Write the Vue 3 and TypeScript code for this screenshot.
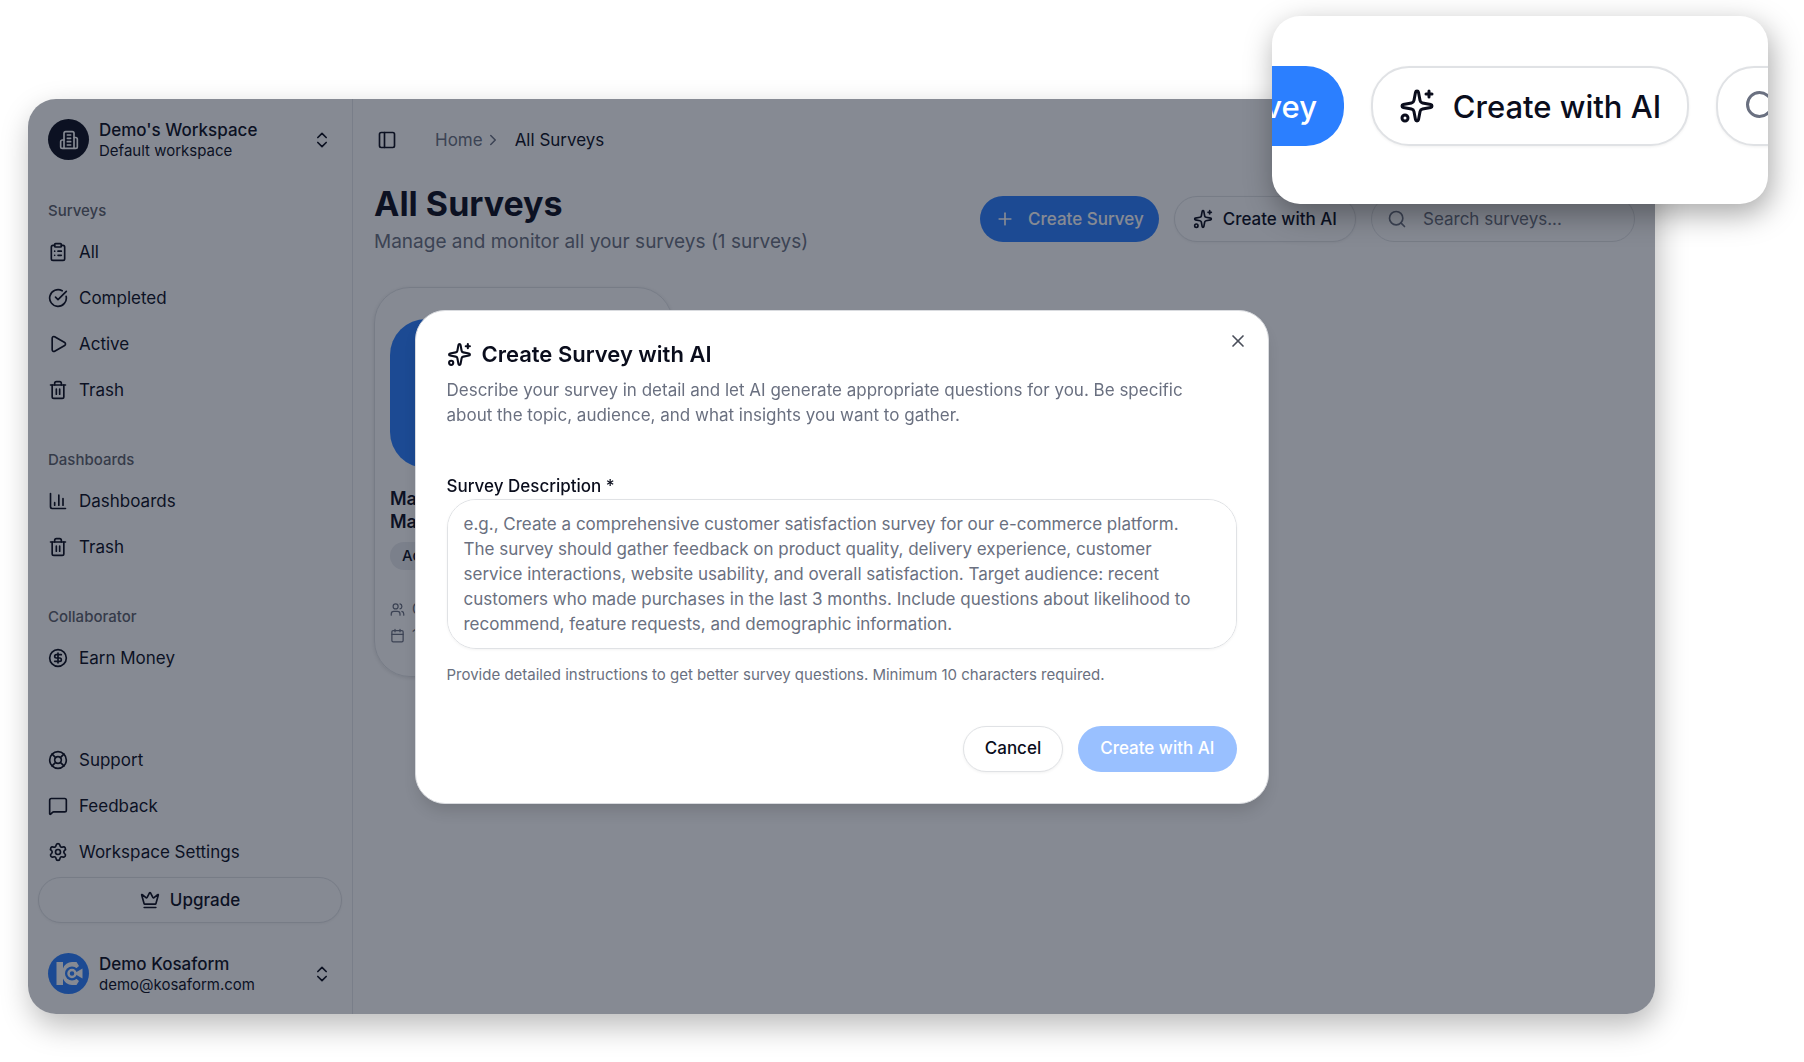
<script setup lang="ts">
import { ref, h, type FunctionalComponent } from 'vue'

const icons: Record<string, string[]> = {
  sparkles: [
    'M11.017 2.814a1 1 0 0 1 1.966 0l1.051 5.558a2 2 0 0 0 1.594 1.594l5.558 1.051a1 1 0 0 1 0 1.966l-5.558 1.051a2 2 0 0 0-1.594 1.594l-1.051 5.558a1 1 0 0 1-1.966 0l-1.051-5.558a2 2 0 0 0-1.594-1.594l-5.558-1.051a1 1 0 0 1 0-1.966l5.558-1.051a2 2 0 0 0 1.594-1.594z',
    'M20 2v4',
    'M22 4h-4',
    'M2 20a2 2 0 1 0 4 0a2 2 0 1 0-4 0',
  ],
  building: [
    'M6 22V4a2 2 0 0 1 2-2h8a2 2 0 0 1 2 2v18Z',
    'M6 12H4a2 2 0 0 0-2 2v6a2 2 0 0 0 2 2h2',
    'M18 9h2a2 2 0 0 1 2 2v9a2 2 0 0 1-2 2h-2',
    'M10 6h4M10 10h4M10 14h4M10 18h4',
  ],
  clipboard: [
    'M9 2h6a1 1 0 0 1 1 1v2a1 1 0 0 1-1 1H9a1 1 0 0 1-1-1V3a1 1 0 0 1 1-1z',
    'M16 4h2a2 2 0 0 1 2 2v14a2 2 0 0 1-2 2H6a2 2 0 0 1-2-2V6a2 2 0 0 1 2-2h2',
    'M12 11h4M12 16h4M8 11h.01M8 16h.01',
  ],
  check: ['M21.801 10A10 10 0 1 1 17 3.335', 'm9 11 3 3L22 4'],
  play: ['M5 5a2 2 0 0 1 3.008-1.728l11.997 6.998a2 2 0 0 1 .003 3.458l-12 7A2 2 0 0 1 5 19z'],
  trash: ['M3 6h18', 'M19 6v14a2 2 0 0 1-2 2H7a2 2 0 0 1-2-2V6', 'M8 6V4a2 2 0 0 1 2-2h4a2 2 0 0 1 2 2v2', 'M10 11v6M14 11v6'],
  chart: ['M3 3v16a2 2 0 0 0 2 2h16', 'M18 17V9M13 17V5M8 17v-3'],
  dollar: ['M2 12a10 10 0 1 0 20 0a10 10 0 1 0-20 0', 'M16 8h-6a2 2 0 1 0 0 4h4a2 2 0 1 1 0 4H8', 'M12 18V6'],
  buoy: [
    'M2 12a10 10 0 1 0 20 0a10 10 0 1 0-20 0',
    'M8 12a4 4 0 1 0 8 0a4 4 0 1 0-8 0',
    'M4.93 4.93l4.24 4.24M14.83 9.17l4.24-4.24M14.83 14.83l4.24 4.24M9.17 14.83l-4.24 4.24',
  ],
  message: ['M22 17a2 2 0 0 1-2 2H6.828a2 2 0 0 0-1.414.586l-2.202 2.202A.71.71 0 0 1 2 21.286V5a2 2 0 0 1 2-2h16a2 2 0 0 1 2 2z'],
  gear: [
    'M9.671 4.136a2.34 2.34 0 0 1 4.659 0 2.34 2.34 0 0 0 3.319 1.915 2.34 2.34 0 0 1 2.33 4.033 2.34 2.34 0 0 0 0 3.831 2.34 2.34 0 0 1-2.33 4.033 2.34 2.34 0 0 0-3.319 1.915 2.34 2.34 0 0 1-4.659 0 2.34 2.34 0 0 0-3.32-1.915 2.34 2.34 0 0 1-2.33-4.033 2.34 2.34 0 0 0 0-3.831A2.34 2.34 0 0 1 6.35 6.051a2.34 2.34 0 0 0 3.319-1.915',
    'M9 12a3 3 0 1 0 6 0a3 3 0 1 0-6 0',
  ],
  crown: [
    'M11.562 3.266a.5.5 0 0 1 .876 0L15.39 8.87a1 1 0 0 0 1.516.294L21.183 5.5a.5.5 0 0 1 .798.519l-2.834 10.246a1 1 0 0 1-.956.734H5.81a1 1 0 0 1-.957-.734L2.02 6.02a.5.5 0 0 1 .798-.519l4.276 3.664a1 1 0 0 0 1.516-.294z',
    'M5 21h14',
  ],
  updown: ['M7 15l5 5 5-5', 'M7 9l5-5 5 5'],
  panel: ['M5 3h14a2 2 0 0 1 2 2v14a2 2 0 0 1-2 2H5a2 2 0 0 1-2-2V5a2 2 0 0 1 2-2z', 'M9 3v18'],
  right: ['M9 18l6-6-6-6'],
  plus: ['M5 12h14', 'M12 5v14'],
  search: ['M3 11a8 8 0 1 0 16 0a8 8 0 1 0-16 0', 'M21 21l-4.3-4.3'],
  close: ['M18 6L6 18', 'M6 6l12 12'],
  users: ['M16 21v-2a4 4 0 0 0-4-4H6a4 4 0 0 0-4 4v2', 'M5 7a4 4 0 1 0 8 0a4 4 0 1 0-8 0', 'M22 21v-2a4 4 0 0 0-3-3.87', 'M16 3.13a4 4 0 0 1 0 7.75'],
  calendar: ['M8 2v4M16 2v4', 'M5 4h14a2 2 0 0 1 2 2v14a2 2 0 0 1-2 2H5a2 2 0 0 1-2-2V6a2 2 0 0 1 2-2z', 'M3 10h18'],
}

const Icon: FunctionalComponent<{ name: string; size?: number }> = (props) =>
  h(
    'svg',
    {
      width: props.size ?? 20,
      height: props.size ?? 20,
      viewBox: '0 0 24 24',
      fill: 'none',
      stroke: 'currentColor',
      'stroke-width': 2,
      'stroke-linecap': 'round',
      'stroke-linejoin': 'round',
      'aria-hidden': 'true',
    },
    (icons[props.name] ?? []).map((d) => h('path', { d })),
  )
Icon.props = ['name', 'size']

interface NavItem { icon: string; label: string }
interface NavGroup { title: string; items: NavItem[] }

const groups: NavGroup[] = [
  {
    title: 'Surveys',
    items: [
      { icon: 'clipboard', label: 'All' },
      { icon: 'check', label: 'Completed' },
      { icon: 'play', label: 'Active' },
      { icon: 'trash', label: 'Trash' },
    ],
  },
  {
    title: 'Dashboards',
    items: [
      { icon: 'chart', label: 'Dashboards' },
      { icon: 'trash', label: 'Trash' },
    ],
  },
  { title: 'Collaborator', items: [{ icon: 'dollar', label: 'Earn Money' }] },
]

const footerItems: NavItem[] = [
  { icon: 'buoy', label: 'Support' },
  { icon: 'message', label: 'Feedback' },
  { icon: 'gear', label: 'Workspace Settings' },
]

const query = ref('')
const description = ref('')
const placeholder =
  'e.g., Create a comprehensive customer satisfaction survey for our e-commerce platform. The survey should gather feedback on product quality, delivery experience, customer service interactions, website usability, and overall satisfaction. Target audience: recent customers who made purchases in the last 3 months. Include questions about likelihood to recommend, feature requests, and demographic information.'
</script>

<template>
  <div class="page">
    <div class="window">
      <aside class="sidebar">
        <button class="account" type="button">
          <span class="avatar dark"><Icon name="building" /></span>
          <span class="who">
            <span class="name">Demo's Workspace</span>
            <span class="sub">Default workspace</span>
          </span>
          <Icon name="updown" />
        </button>

        <nav class="groups">
          <section v-for="group in groups" :key="group.title" class="group">
            <h2 class="group-title">{{ group.title }}</h2>
            <a v-for="item in group.items" :key="item.label" href="#" class="nav-item">
              <Icon :name="item.icon" />{{ item.label }}
            </a>
          </section>
        </nav>

        <div class="side-footer">
          <a v-for="item in footerItems" :key="item.label" href="#" class="nav-item">
            <Icon :name="item.icon" />{{ item.label }}
          </a>
          <button class="btn outline upgrade" type="button"><Icon name="crown" />Upgrade</button>
          <button class="account" type="button">
            <span class="avatar blue">
              <svg width="41" height="41" viewBox="0 0 41 41" aria-hidden="true">
                <path d="M8.5 9H15v6.500q2.500-6.500 9-6.500h4.500l2.500 4-3.500 3v9l3.500 3-2.500 4H24q-6.500 0-9-6.500V32H8.500z" fill="#fff" />
                <circle cx="24" cy="20.500" r="7" fill="#2b7fff" />
                <path d="M26 20.500l8.500-5v10z" fill="#fff" />
                <circle cx="24" cy="20.500" r="3.500" fill="#2b7fff" stroke="#fff" stroke-width="2.500" />
              </svg>
            </span>
            <span class="who">
              <span class="name">Demo Kosaform</span>
              <span class="sub">demo@kosaform.com</span>
            </span>
            <Icon name="updown" />
          </button>
        </div>
      </aside>

      <main class="main">
        <div class="topbar">
          <button class="plain" type="button" aria-label="Toggle sidebar"><Icon name="panel" /></button>
          <nav class="crumbs" aria-label="Breadcrumb">
            <a href="#">Home</a>
            <Icon name="right" :size="18" />
            <span class="here">All Surveys</span>
          </nav>
        </div>

        <header class="head">
          <div>
            <h1>All Surveys</h1>
            <p>Manage and monitor all your surveys (1 surveys)</p>
          </div>
          <div class="tools">
            <button class="btn primary create" type="button"><Icon name="plus" />Create Survey</button>
            <button class="btn outline" type="button"><Icon name="sparkles" />Create with AI</button>
            <label class="search">
              <Icon name="search" />
              <input v-model="query" type="text" placeholder="Search surveys..." aria-label="Search surveys" />
            </label>
          </div>
        </header>

        <article class="card">
          <div class="cover"></div>
          <h3>Ma<br />Ma</h3>
          <span class="badge">Active</span>
          <p class="meta"><Icon name="users" :size="15" />0</p>
          <p class="meta"><Icon name="calendar" :size="15" />1</p>
        </article>
      </main>

      <div class="overlay">
        <form class="modal" role="dialog" aria-labelledby="modal-title" @submit.prevent>
          <button class="plain close" type="button" aria-label="Close"><Icon name="close" /></button>
          <h2 id="modal-title"><Icon name="sparkles" :size="25" />Create Survey with AI</h2>
          <p class="lead">
            Describe your survey in detail and let AI generate appropriate questions for you. Be specific about the
            topic, audience, and what insights you want to gather.
          </p>
          <label for="survey-description">Survey Description *</label>
          <textarea id="survey-description" v-model="description" rows="5" :placeholder="placeholder"></textarea>
          <p class="hint">Provide detailed instructions to get better survey questions. Minimum 10 characters required.</p>
          <div class="actions">
            <button class="btn outline" type="button">Cancel</button>
            <button class="btn primary" type="submit" disabled>Create with AI</button>
          </div>
        </form>
      </div>
    </div>

    <div class="callout">
      <div class="cell end"><button class="big primary" type="button">Create Survey</button></div>
      <button class="big outline" type="button"><Icon name="sparkles" :size="36" />Create with AI</button>
      <div class="cell"><button class="big outline" type="button" aria-label="Search"><Icon name="search" :size="36" /></button></div>
    </div>
  </div>
</template>

<style>
body {
  margin: 0;
  background: #fff;
}
</style>

<style scoped>
* {
  box-sizing: border-box;
}
.page {
  position: relative;
  display: flex;
  min-height: 100vh;
  padding: 99px 149px 48px 28px;
  overflow: hidden;
  font-family: Inter, "Liberation Sans", sans-serif;
  font-size: 17px;
  line-height: 25px;
  color: #0a0d1c;
}
svg {
  flex: none;
  display: block;
}
h1, h2, h3, p {
  margin: 0;
}
a {
  color: inherit;
  text-decoration: none;
}
button, input, textarea {
  font: inherit;
  color: inherit;
}
.window {
  position: relative;
  display: flex;
  flex: 1;
  min-width: 0;
  border-radius: 28px;
  background: #fff;
  box-shadow: 3px 12px 30px rgba(0, 0, 0, 0.27);
}
.sidebar {
  display: flex;
  flex: none;
  flex-direction: column;
  width: 325px;
  padding: 10px;
  border-right: 1px solid #e5e7eb;
}
.account {
  display: flex;
  align-items: center;
  gap: 10px;
  width: 100%;
  height: 61px;
  padding: 0 10px;
  border: 0;
  background: none;
  text-align: left;
}
.avatar {
  display: grid;
  flex: none;
  place-items: center;
  width: 41px;
  height: 41px;
  border-radius: 50%;
  color: #fff;
}
.avatar.dark {
  background: #0a0d1c;
}
.avatar.blue {
  background: #2b7fff;
}
.who {
  display: flex;
  flex: 1;
  flex-direction: column;
}
.name {
  font-weight: 500;
  line-height: 22px;
}
.sub {
  font-size: 15px;
  line-height: 20px;
}
.groups {
  display: flex;
  flex-direction: column;
  gap: 28px;
  padding: 22px 0;
}
.group-title {
  padding: 0 10px;
  font-size: 15px;
  font-weight: 500;
  line-height: 37px;
  color: #5d616b;
}
.nav-item {
  display: flex;
  align-items: center;
  gap: 11px;
  height: 46px;
  padding: 0 10px;
}
.side-footer {
  display: flex;
  flex-direction: column;
  margin-top: auto;
}
.btn {
  display: flex;
  align-items: center;
  justify-content: center;
  gap: 10px;
  height: 46px;
  padding: 0 21px;
  border: 1px solid transparent;
  border-radius: 23px;
  font-weight: 500;
  white-space: nowrap;
}
.outline {
  border-color: #e0e2e5;
  background: #fff;
  box-shadow: 0 1px 3px rgba(0, 0, 0, 0.06);
}
.primary {
  background: #2b7fff;
  color: #fff;
}
.upgrade {
  margin: 2px 0 20px;
}
.main {
  flex: 1;
  min-width: 0;
  padding: 20px 20px 20px 21px;
}
.plain {
  padding: 0;
  border: 0;
  background: none;
}
.topbar {
  display: flex;
  align-items: center;
  gap: 38px;
  height: 42px;
  padding: 0 3px;
}
.crumbs {
  display: flex;
  align-items: center;
  gap: 1px;
  color: #6a7080;
}
.here {
  margin-left: 12px;
  color: #0a0d1c;
}
.head {
  display: flex;
  align-items: flex-start;
  justify-content: space-between;
  padding-top: 22px;
}
.head h1 {
  margin-bottom: 4px;
  font-size: 34px;
  font-weight: 700;
  line-height: 42px;
}
.head p {
  font-size: 19px;
  line-height: 26px;
  color: #6a7080;
}
.tools {
  display: flex;
  gap: 15px;
  padding-top: 13px;
}
.tools .btn {
  padding: 0 18px;
}
.tools .create {
  gap: 13px;
  padding: 0 14px;
}
.search {
  display: flex;
  align-items: center;
  gap: 16px;
  width: 264px;
  height: 46px;
  padding: 0 15px;
  border: 1px solid #e0e2e5;
  border-radius: 23px;
  color: #6a7080;
}
.search input {
  flex: 1;
  min-width: 0;
  padding: 0;
  border: 0;
  outline: 0;
  background: none;
}
::placeholder {
  color: #6a7080;
  opacity: 1;
}
.card {
  width: 299px;
  margin-top: 32px;
  padding: 31px 15px 28px;
  border: 1px solid #e0e2e5;
  border-radius: 36px;
  box-shadow: 0 1px 4px rgba(0, 0, 0, 0.12);
}
.cover {
  height: 149px;
  border-radius: 36px;
  background: #2b7fff;
}
.card h3 {
  margin-top: 19px;
  font-size: 18px;
  font-weight: 600;
  line-height: 23px;
}
.badge {
  display: inline-block;
  margin: 9px 0 26px;
  padding: 0 12px;
  border-radius: 14px;
  background: #e9eaee;
  font-size: 15px;
  font-weight: 500;
  line-height: 28px;
}
.meta {
  display: flex;
  align-items: center;
  gap: 7px;
  font-size: 15px;
  line-height: 26px;
  color: #6a7080;
}
.overlay {
  position: absolute;
  inset: 0;
  display: flex;
  align-items: center;
  justify-content: center;
  border-radius: 28px;
  background: rgba(13, 21, 40, 0.5);
}
.modal {
  position: relative;
  width: 854px;
  padding: 31px;
  border: 1px solid #d9dbdf;
  border-radius: 30px;
  background: #fff;
  box-shadow: 0 10px 16px -4px rgba(0, 0, 0, 0.14);
}
.close {
  position: absolute;
  top: 20px;
  right: 20px;
  color: #4a4e5a;
}
.modal h2 {
  display: flex;
  align-items: center;
  gap: 10px;
  font-size: 22px;
  font-weight: 600;
}
.lead {
  margin-top: 11px;
  padding-right: 32px;
  color: #6a7080;
}
.modal label {
  display: block;
  margin-top: 46px;
  font-weight: 500;
}
.modal textarea {
  display: block;
  width: 100%;
  height: 150px;
  padding: 12px 34px 12px 16px;
  border: 1px solid #e0e2e5;
  border-radius: 29px;
  outline: 0;
  resize: none;
  box-shadow: 0 1px 3px rgba(0, 0, 0, 0.05);
}
.hint {
  margin-top: 13px;
  font-size: 15px;
  color: #6a7080;
}
.actions {
  display: flex;
  justify-content: flex-end;
  gap: 15px;
  margin-top: 39px;
}
.btn:disabled {
  background: #99c0ff;
}
.callout {
  position: absolute;
  top: 16px;
  right: 36px;
  display: grid;
  grid-template-columns: 72px 318px 52px;
  align-items: center;
  gap: 27px;
  width: 496px;
  height: 188px;
  padding-bottom: 8px;
  border-radius: 28px;
  overflow: hidden;
  background: #fff;
  box-shadow: 3px 10px 30px rgba(0, 0, 0, 0.35);
}
.cell {
  display: flex;
  min-width: 0;
}
.cell.end {
  justify-content: flex-end;
}
.big {
  display: flex;
  flex: none;
  align-items: center;
  justify-content: center;
  gap: 18px;
  height: 80px;
  padding: 0 25px;
  border: 2px solid transparent;
  border-radius: 38px;
  font-size: 31px;
  font-weight: 500;
  white-space: nowrap;
}
.big.outline {
  border-color: #e0e2e5;
}
.cell .outline {
  color: #6a7080;
}
</style>
